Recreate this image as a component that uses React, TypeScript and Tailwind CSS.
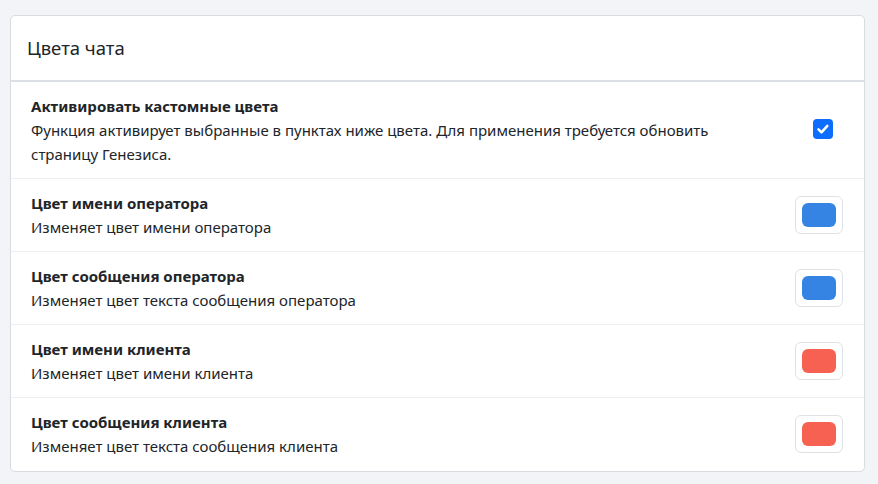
import React, { useState } from 'react';

type ColorRow = {
  title: string;
  desc: string;
  color: string;
};

const ROWS: ColorRow[] = [
  { title: 'Цвет имени оператора', desc: 'Изменяет цвет имени оператора', color: '#3584e4' },
  { title: 'Цвет сообщения оператора', desc: 'Изменяет цвет текста сообщения оператора', color: '#3584e4' },
  { title: 'Цвет имени клиента', desc: 'Изменяет цвет имени клиента', color: '#f66151' },
  { title: 'Цвет сообщения клиента', desc: 'Изменяет цвет текста сообщения клиента', color: '#f66151' },
];

export default function App() {
  const [enabled, setEnabled] = useState(true);

  return (
    <div className="min-h-screen bg-[#f3f4f8] px-[10px] pt-[15px] font-['Noto_Sans',sans-serif] text-[#212529]">
      <div className="w-[855px] rounded-[5px] border border-[#d9dce1] bg-white">
        {/* Header */}
        <div className="flex h-[66px] items-center border-b-2 border-[#dde0e4] px-4">
          <h2 className="text-[18.5px] font-normal leading-none">Цвета чата</h2>
        </div>

        {/* Toggle row */}
        <div className="flex items-center border-b border-[#eceef1] py-3 pl-5 pr-[31px]">
          <div className="w-[720px] text-[15px] leading-6">
            <div className="font-bold">Активировать кастомные цвета</div>
            <div>
              Функция активирует выбранные в пунктах ниже цвета. Для применения требуется обновить страницу Генезиса.
            </div>
          </div>
          <div className="flex-1" />
          <button
            onClick={() => setEnabled(!enabled)}
            className={
              enabled
                ? '-mt-[3px] flex h-5 w-5 items-center justify-center rounded-[4px] bg-[#0d6efd]'
                : '-mt-[3px] flex h-5 w-5 items-center justify-center rounded-[4px] border border-[#adb5bd] bg-white'
            }
          >
            {enabled && (
              <svg width="16" height="16" viewBox="0 0 16 16" fill="none">
                <path d="M3.5 8.3l3 3 5.8-6.4" stroke="white" strokeWidth="2.6" strokeLinecap="round" strokeLinejoin="round" />
              </svg>
            )}
          </button>
        </div>

        {/* Color rows */}
        {ROWS.map((row, i) => (
          <div
            key={row.title}
            className={
              i < ROWS.length - 1
                ? 'flex items-center border-b border-[#eceef1] py-3 pl-5 pr-[21px]'
                : 'flex items-center pb-[13px] pt-3 pl-5 pr-[21px]'
            }
          >
            <div className="flex-1 text-[15px] leading-6">
              <div className="font-bold">{row.title}</div>
              <div>{row.desc}</div>
            </div>
            <div className="flex h-[38px] w-[48px] items-center justify-center rounded-[6px] border border-[#dee2e6] bg-white">
              <div className="h-6 w-[34px] rounded-[6px]" style={{ backgroundColor: row.color }} />
            </div>
          </div>
        ))}
      </div>
    </div>
  );
}
